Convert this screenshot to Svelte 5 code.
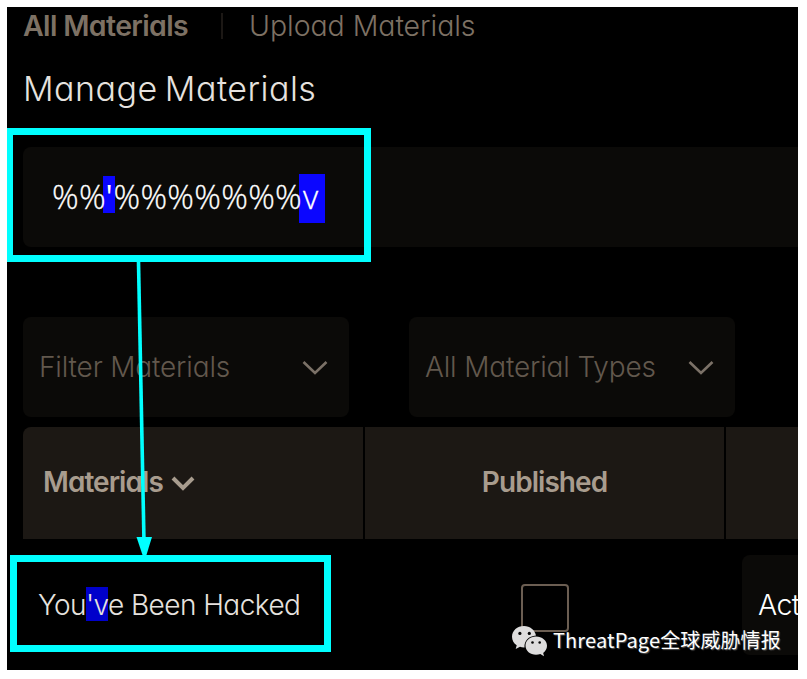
<script>
  const filters = [
    { label: 'Filter Materials', cls: 'filter-a' },
    { label: 'All Material Types', cls: 'filter-b' }
  ];
</script>

<main class="screen">
  <nav>
    <span class="tab active">All Materials</span>
    <span class="divider"></span>
    <span class="tab upload">Upload Materials</span>
  </nav>

  <h1><span>Manage Materials</span></h1>

  <div class="search">
    <span class="query"><span>%%</span><mark class="quote">'</mark><span>%%%%%%%</span><mark class="vee">v</mark></span>
  </div>

  <div class="filters">
    {#each filters as filter}
      <div class="select">
        <span class={filter.cls}>{filter.label}</span>
        <svg width="28" height="18" viewBox="0 0 28 18"><path d="M2.500 4 L14 15 L25.500 4" fill="none" stroke="#7b7167" stroke-width="2.6" /></svg>
      </div>
    {/each}
  </div>

  <div class="thead">
    <div class="th first">
      <span>Materials</span>
      <svg width="24" height="16" viewBox="0 0 24 16"><path d="M2 2 L12 12 L22 2" fill="none" stroke="#a89c8e" stroke-width="4" /></svg>
    </div>
    <div class="th second"><span>Published</span></div>
    <div class="th third"></div>
  </div>

  <div class="row">
    <div class="name"><span>You<mark>'v</mark>e Been Hacked</span></div>
    <div class="check"><span class="box"></span></div>
    <div class="action"><span>Act</span></div>
  </div>

  <div class="frame frame-search"></div>
  <div class="frame frame-result"></div>
  <svg class="arrow" width="24" height="293" viewBox="0 0 24 293">
    <path d="M6.500 0 L12 280" stroke="#00ffff" stroke-width="3.600" />
    <path d="M4.500 275 H20 L13.500 296 H11.500 Z" fill="#00ffff" />
  </svg>

  <div class="watermark">
    <svg width="36" height="31" viewBox="0 0 36 31">
      <path fill="#dedddd" d="M12 0 C5.200 0 0 4.700 0 10.700 C0 14.300 1.900 17.300 4.700 19.300 L3.700 23 L8 20.800 C9.300 21.200 11 21.500 12.500 21.400 C12 15 16.500 10 24 9.500 C22.800 4 18 0 12 0Z" />
      <path fill="#dedddd" d="M24 10.500 C18 10.500 13.500 14.600 13.500 19.500 C13.500 24.800 18.200 28.800 24 28.800 C25.500 28.800 27 28.500 28.300 28 L32 30.300 L31.200 26.900 C33.500 25.200 35 22.700 35 19.700 C35 14.500 30 10.500 24 10.500Z" />
      <g fill="#050505">
        <circle cx="7.900" cy="7.400" r="1.600" /><circle cx="17.300" cy="7.400" r="1.600" />
        <circle cx="20.500" cy="16.500" r="1.300" /><circle cx="27.700" cy="16.500" r="1.300" />
      </g>
    </svg>
    <span>ThreatPage全球威胁情报</span>
  </div>
</main>

<style>
  :global(body) { background: #fff; }
  .screen {
    position: relative;
    box-sizing: border-box;
    width: 791px;
    height: 663px;
    margin: 7px 0 0 7px;
    padding-left: 16px;
    overflow: hidden;
    background: #000;
    color: #e6e2df;
    font: 300 28.500px 'Inter', 'Liberation Sans', sans-serif;
    font-feature-settings: 'cv11' 1;
    white-space: nowrap;
  }
  nav { display: flex; align-items: center; height: 37px; color: #7d7164; }
  .active { width: 198px; font-weight: 600; letter-spacing: -0.650px; }
  .divider { width: 2px; height: 26px; margin-right: 26px; background: #1c1815; }
  .upload { letter-spacing: -0.050px; }
  h1 { display: flex; align-items: center; height: 89px; margin: 0; font-size: 34px; font-weight: 300; letter-spacing: 0.500px; word-spacing: -3px; }
  .search {
    display: flex;
    align-items: center;
    height: 100px;
    margin-top: 14px;
    padding-left: 29px;
    border-radius: 8px 0 0 8px;
    background: #0b0a08;
    color: #fff;
    font-size: 33px;
  }
  .query { display: flex; align-items: center; font-family: 'Open Sans', sans-serif; }
  .query span { z-index: 1; width: 53.500px; margin-top: -1px; font-weight: 300; letter-spacing: 0.300px; -webkit-text-stroke: 0.300px #fff; }
  .query .quote + span { width: 188.500px; }
  mark { background: #0000cb; color: inherit; }
  .quote { width: 12px; height: 37px; line-height: 42px; margin: -5px -1.500px 0 -2.500px; background: #0b06ff; text-align: center; font-weight: 400; }
  .vee { width: 22px; height: 49px; line-height: 46px; margin: 2px 0 0 -3px; padding-left: 4px; background: #0b06ff; font-weight: 300; -webkit-text-stroke: 0.300px #fff; }
  .filters { display: flex; gap: 60px; margin-top: 70px; }
  .select {
    display: flex;
    align-items: center;
    justify-content: space-between;
    box-sizing: border-box;
    width: 326px;
    height: 100px;
    padding: 0 20px 0 16px;
    border-radius: 8px;
    background: #0b0a08;
    color: #62584d;
    font-size: 28px;
    letter-spacing: -0.150px;
  }
  .thead { display: flex; gap: 2px; margin-top: 10px; color: #a89c8e; font-size: 28px; font-weight: 600; letter-spacing: -0.950px; }
  .th {
    display: flex;
    align-items: center;
    box-sizing: border-box;
    height: 112px;
    padding-bottom: 3px;
    background: #1c1814;
  }
  .first { width: 340px; padding-left: 20px; gap: 8px; border-radius: 8px 0 0; }
  .first svg { margin-top: 5px; }
  .second { width: 359px; justify-content: center; }
  .third { width: 72px; }
  .row { display: flex; height: 131px; }
  .name, .check { box-sizing: border-box; flex: none; }
  .name { width: 342px; height: 131px; padding-left: 15px; line-height: 132px; font-size: 28px; letter-spacing: -0.550px; }
  .name mark { display: inline-block; width: 22px; height: 34px; line-height: 36px; }
  .check { width: 377px; padding-left: 156px; padding-top: 45px; }
  .box { display: block; box-sizing: border-box; width: 48px; height: 48px; border: 2px solid #6b5e52; border-radius: 4px; }
  .action {
    flex: none;
    width: 100px;
    height: 100px;
    margin-top: 16px;
    padding-left: 16px;
    border-radius: 8px 0 0 8px;
    background: #0b0a08;
    color: #fff;
    line-height: 100px;
    letter-spacing: -0.600px;
  }
  .frame { position: absolute; box-sizing: border-box; border: 7px solid #00ffff; }
  .frame-search { left: 0; top: 121px; width: 364px; height: 134px; border-left-width: 6px; }
  .frame-result { left: 3px; top: 548px; width: 321px; height: 97px; }
  .arrow { position: absolute; left: 125px; top: 255px; }
  .watermark {
    position: absolute;
    left: 505px;
    top: 619px;
    display: flex;
    gap: 5px;
    color: #fff;
    font: 400 20px/29px 'Noto Sans CJK SC', sans-serif;
    letter-spacing: 0.120px;
    text-shadow: 1px 1px 1px #555;
  }
  .watermark span { margin-top: -1px; }
</style>
